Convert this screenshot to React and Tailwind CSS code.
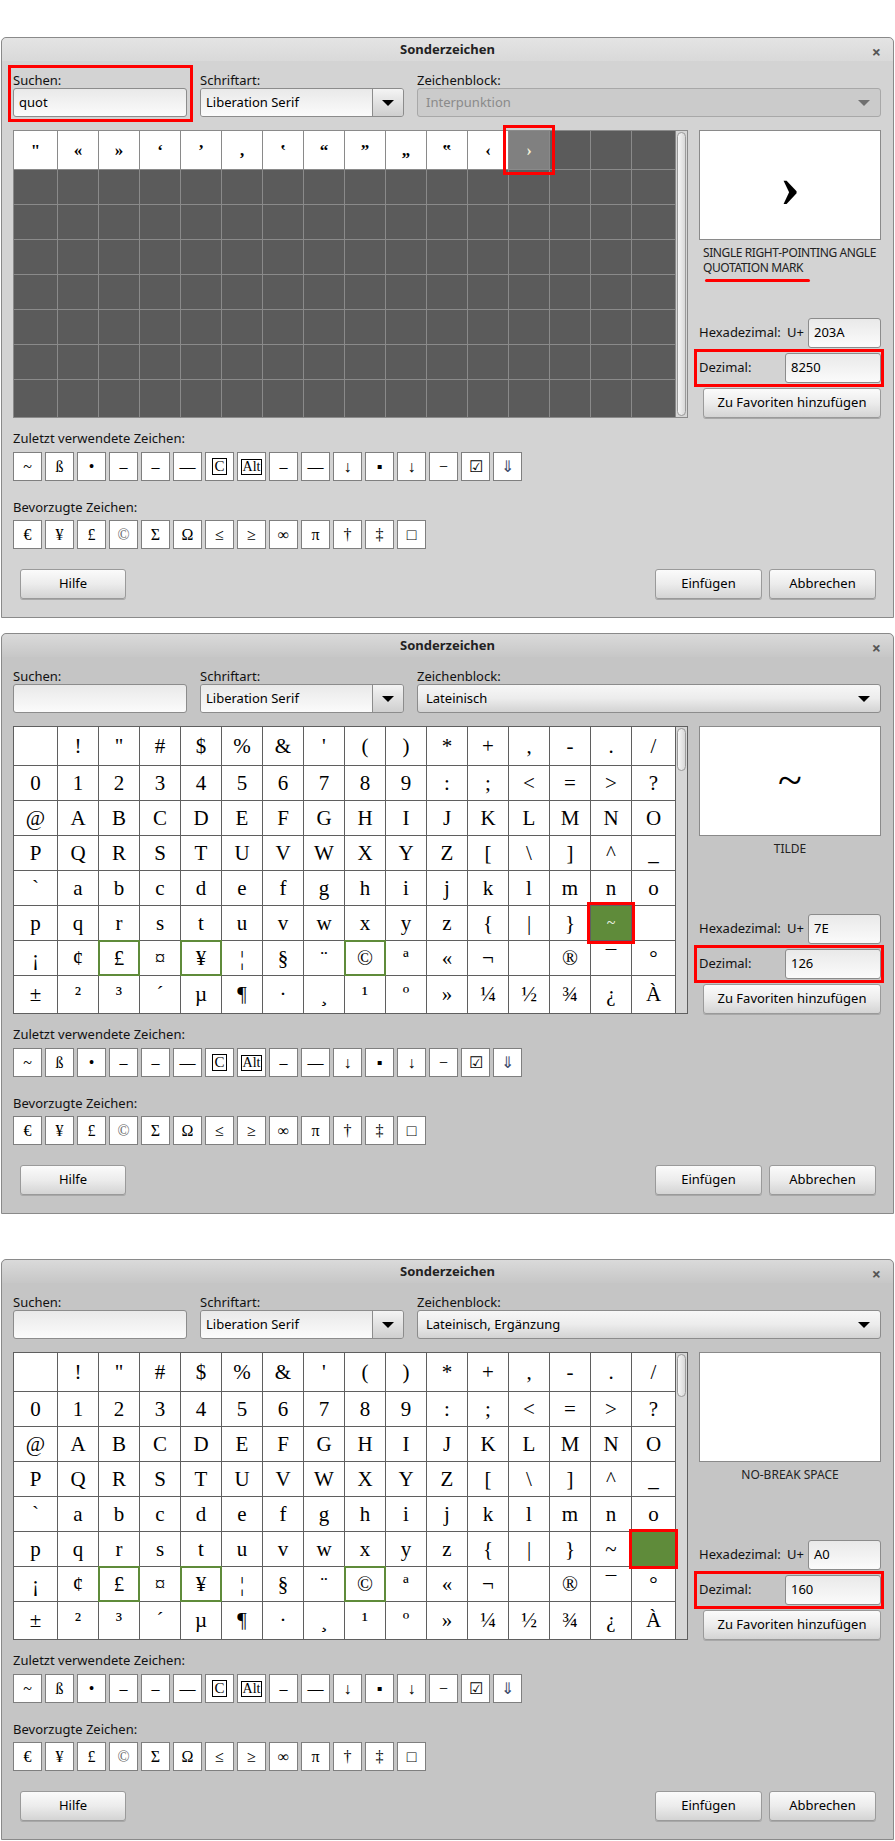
import React from 'react';

const recent = ['~', 'ß', '•', '–', '–', '—', 'C', 'Alt', '–', '—', '↓', '▪', '↓', '−', '☑', '⇓'];
const favorites = ['€', '¥', '£', '©', 'Σ', 'Ω', '≤', '≥', '∞', 'π', '†', '‡', '□'];
const quotes = ['"', '«', '»', '‘', '’', '‚', '‛', '“', '”', '„', '‟', '‹', '›'];

function latinChars() {
  const out = [];
  for (let c = 0x20; c <= 0x7e; c++) out.push(String.fromCharCode(c));
  out.push('');
  for (let c = 0xa1; c <= 0xc0; c++) out.push(c === 0xad ? '' : String.fromCharCode(c));
  return out;
}

const latin = latinChars();

function RedBox({ className }) {
  return <div className={`pointer-events-none absolute z-10 border-[3px] border-[#ff0000] ${className}`} />;
}

function Input({ children, className = '' }) {
  return (
    <div className={`flex h-[29px] items-center rounded-[3px] border border-[#8c8c8c] bg-gradient-to-b from-[#e9e9e9] to-[#fbfbfb] pl-[5px] text-[13px] text-black ${className}`}>
      {children}
    </div>
  );
}

function Button({ children, className = '' }) {
  return (
    <div className={`flex h-[30px] items-center justify-center rounded-[3px] border border-[#9a9a9a] bg-gradient-to-b from-[#fbfbfb] via-[#ececec] to-[#d4d4d4] text-[13px] text-black shadow-[0_1px_0_#a8a8a8] ${className}`}>
      {children}
    </div>
  );
}

function SmallBox({ ch }) {
  let inner = ch;
  if (ch === 'C') inner = <span className="border border-black px-[1px] text-[15px] leading-[15px]">C</span>;
  if (ch === 'Alt') inner = <span className="border border-black px-[1px] text-[14px] leading-[14px]">Alt</span>;
  const color = ch === '⇓' ? 'text-[#3a4a6a]' : ch === '©' ? 'text-[#666]' : 'text-black';
  return (
    <div className={`flex h-[29px] w-[29px] items-center justify-center border border-[#7f7f7f] bg-white font-['Liberation_Serif',serif] text-[16px] ${color}`}>
      {inner}
    </div>
  );
}

function CharGrid({ variant }) {
  const dark = variant === 'search';
  const cells = [];
  for (let i = 0; i < 128; i++) {
    let ch = '';
    let cls = '';
    let overlay = null;
    if (dark) {
      if (i < quotes.length) {
        ch = quotes[i];
        cls = 'bg-white text-black text-[17px] font-bold';
        if (i === 12) {
          cls = 'bg-[#808080] text-[#f3f0d8] text-[17px] font-bold';
          overlay = <RedBox className="-inset-[6px]" />;
        }
      } else {
        cls = 'bg-[#5b5b5b]';
      }
    } else {
      ch = latin[i];
      cls = 'bg-white text-black text-[21px]';
      if (i === 98 || i === 100 || i === 104) {
        overlay = <div className="pointer-events-none absolute -inset-px z-10 border-2 border-[#5f8b3a]" />;
      }
      if (variant === 'tilde' && i === 94) {
        cls = 'bg-[#5f8b3a] text-[#eef3e8] text-[16px]';
        overlay = <RedBox className="-inset-[4px]" />;
      }
      if (variant === 'nbsp' && i === 95) {
        cls = 'bg-[#5f8b3a]';
        overlay = <RedBox className="-inset-[3px]" />;
      }
    }
    cells.push(
      <div key={i} className={`relative flex items-center justify-center leading-none ${cls}`}>
        {ch}
        {overlay}
      </div>
    );
  }
  return (
    <div className={`flex h-[288px] w-[675px] border ${dark ? 'border-[#8a8a8a]' : 'border-[#5f5f5f]'}`}>
      <div className={`grid grid-cols-[43px_repeat(14,40px)_43px] grid-rows-[38px_repeat(6,34px)_37px] gap-px font-['Liberation_Serif',serif] ${dark ? 'bg-[#8a8a8a]' : 'bg-[#5f5f5f]'}`}>
        {cells}
      </div>
      <div className={`w-[12px] border-l ${dark ? 'border-[#8a8a8a]' : 'border-[#5f5f5f]'} bg-[#d6d6d6] p-[1px]`}>
        <div className={`w-full rounded-full border border-[#9a9a9a] bg-gradient-to-r from-[#f6f6f6] to-[#d8d8d8] ${dark ? 'h-full' : 'h-[43px]'}`} />
      </div>
    </div>
  );
}

function Dialog({ variant }) {
  const first = variant === 'search';
  const info = {
    search: { search: 'quot', block: 'Interpunktion', hex: '203A', dec: '8250', preview: '›' },
    tilde: { search: '', block: 'Lateinisch', hex: '7E', dec: '126', preview: '~' },
    nbsp: { search: '', block: 'Lateinisch, Ergänzung', hex: 'A0', dec: '160', preview: '' },
  }[variant];

  return (
    <div className={`flex h-[581px] w-[893px] flex-col rounded-t-[5px] border border-[#8a8a8a] font-['Noto_Sans','Open_Sans',sans-serif] text-[13px] text-[#111] ${first ? 'bg-[#d3d3d3]' : 'bg-[#c5c5c5]'}`}>
      {/* title bar */}
      <div className={`relative flex h-[23px] items-center justify-center rounded-t-[5px] ${first ? 'bg-gradient-to-b from-[#e4e4e4] to-[#d9d9d9]' : 'bg-gradient-to-b from-[#dadada] to-[#c7c7c7]'}`}>
        <span className="text-[13px] font-bold text-[#222]">Sonderzeichen</span>
        <span className="absolute right-[12px] top-[2px] text-[16px] font-bold text-[#555]">×</span>
      </div>

      <div className="flex flex-col px-[11px]">
        {/* top fields */}
        <div className="mt-[11px] flex gap-[13px]">
          <div className="relative w-[174px]">
            <div className="h-[16px] leading-[16px]">Suchen:</div>
            <Input>{info.search}</Input>
            {first && <RedBox className="-left-[5px] -right-[6px] -top-[7px] -bottom-[5px]" />}
          </div>
          <div className="w-[204px]">
            <div className="h-[16px] leading-[16px]">Schriftart:</div>
            <div className="flex h-[29px] overflow-hidden rounded-[3px] border border-[#8c8c8c]">
              <div className="flex flex-1 items-center bg-gradient-to-b from-[#e9e9e9] to-[#fbfbfb] pl-[5px] text-black">Liberation Serif</div>
              <div className="flex w-[31px] items-center justify-center border-l border-[#8c8c8c] bg-gradient-to-b from-[#f4f4f4] to-[#cfcfcf]">
                <div className="h-0 w-0 border-x-[6px] border-t-[6px] border-x-transparent border-t-black" />
              </div>
            </div>
          </div>
          <div className="w-[464px]">
            <div className="h-[16px] leading-[16px]">Zeichenblock:</div>
            <div className={`flex h-[29px] items-center justify-between rounded-[3px] border pl-[8px] pr-[10px] ${first ? 'border-[#a8a8a8] bg-[#cbcbcb] text-[#8a8a8a]' : 'border-[#8c8c8c] bg-gradient-to-b from-[#f7f7f7] via-[#ececec] to-[#d3d3d3] text-black'}`}>
              <span>{info.block}</span>
              <div className={`h-0 w-0 border-x-[6px] border-t-[6px] border-x-transparent ${first ? 'border-t-[#707070]' : 'border-t-black'}`} />
            </div>
          </div>
        </div>

        {/* grid + info */}
        <div className="mt-[13px] flex gap-[11px]">
          <CharGrid variant={variant} />
          <div className="flex w-[182px] flex-col">
            <div className="flex h-[110px] items-center justify-center border border-[#8a8a8a] bg-white text-black">
              {variant === 'search' && <span className="font-['Liberation_Serif',serif] text-[62px] font-bold leading-none">{info.preview}</span>}
              {variant === 'tilde' && <span className="font-['Liberation_Serif',serif] text-[44px]">{info.preview}</span>}
            </div>
            {variant === 'search' && (
              <div className="mt-[5px] whitespace-nowrap pl-[4px] text-[12px] leading-[15px] tracking-[-0.4px] text-[#222]">
                <div>SINGLE RIGHT-POINTING ANGLE</div>
                <div>QUOTATION MARK</div>
                <div className="mt-[4px] ml-[2px] h-[3px] w-[105px] rounded-full bg-[#ff0000]" />
              </div>
            )}
            {variant === 'tilde' && <div className="mt-[5px] text-center text-[12px] leading-[15px] text-[#222]">TILDE</div>}
            {variant === 'nbsp' && <div className="mt-[5px] text-center text-[12px] leading-[15px] text-[#222]">NO-BREAK SPACE</div>}

            <div className="mt-auto flex flex-col gap-[5px]">
              <div className="flex h-[30px] items-center">
                <span className="w-[88px]">Hexadezimal:</span>
                <span className="w-[21px]">U+</span>
                <Input className="h-[30px] w-[73px]">{info.hex}</Input>
              </div>
              <div className="relative flex h-[30px] items-center">
                <span className="w-[86px]">Dezimal:</span>
                <Input className="h-[30px] w-[96px]">{info.dec}</Input>
                <RedBox className="-left-[5px] -right-[3px] -top-[4px] -bottom-[4px]" />
              </div>
              <Button className="ml-[4px]">Zu Favoriten hinzufügen</Button>
            </div>
          </div>
        </div>

        {/* recent */}
        <div className="mt-[12px] h-[16px] leading-[16px]">Zuletzt verwendete Zeichen:</div>
        <div className="mt-[6px] flex gap-[3px]">
          {recent.map((c, i) => <SmallBox key={i} ch={c} />)}
        </div>

        {/* favourites */}
        <div className="mt-[18px] h-[16px] leading-[16px]">Bevorzugte Zeichen:</div>
        <div className="mt-[5px] flex gap-[3px]">
          {favorites.map((c, i) => <SmallBox key={i} ch={c} />)}
        </div>

        {/* buttons */}
        <div className="mt-[20px] flex items-center pl-[7px] pr-[6px]">
          <Button className="w-[106px]">Hilfe</Button>
          <div className="ml-auto flex gap-[7px]">
            <Button className="w-[107px]">Einfügen</Button>
            <Button className="w-[107px]">Abbrechen</Button>
          </div>
        </div>
      </div>
    </div>
  );
}

export default function App() {
  return (
    <div className="min-h-[1841px] w-[895px] bg-white pl-[1px] pt-[37px]">
      <Dialog variant="search" />
      <div className="h-[15px]" />
      <Dialog variant="tilde" />
      <div className="h-[45px]" />
      <Dialog variant="nbsp" />
    </div>
  );
}
